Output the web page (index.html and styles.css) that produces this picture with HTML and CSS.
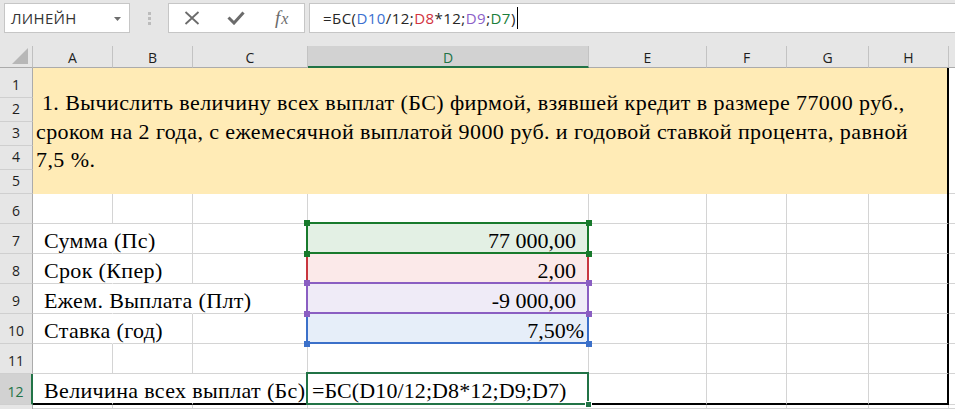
FILE: index.html
```html
<!DOCTYPE html>
<html lang="ru">
<head>
<meta charset="utf-8">
<title>Excel — БС</title>
<link rel="stylesheet" href="styles.css">
</head>
<body>
<div class="fbar">
  <div class="namebox">
    <span class="nb-text">ЛИНЕЙН</span>
    <svg class="dd" width="7" height="4" viewBox="0 0 7 4"><path d="M0 0H7L3.5 4Z" fill="#6d6d6d"/></svg>
  </div>
  <div class="grip"><i></i><i></i><i></i></div>
  <div class="btns">
    <svg class="ico-x" width="16" height="14" viewBox="0 0 16 14"><path d="M1.5 1L14.5 13M14.5 1L1.5 13" stroke="#6b6b6b" stroke-width="1.8" fill="none"/></svg>
    <svg class="ico-ok" width="18" height="14" viewBox="0 0 18 14"><path d="M1.5 6.5L7 12L16.5 1.5" stroke="#6b6b6b" stroke-width="3" fill="none"/></svg>
    <span class="fx"><span>f</span><span class="fx-x">x</span></span>
  </div>
  <div class="formula"><span class="ftext">=БС(<span class="c-blue">D10</span>/12;<span class="c-red">D8</span>*12;<span class="c-purple">D9</span>;<span class="c-green">D7</span>)</span><span class="caret"></span></div>
</div>

<div class="sheet">
  <!-- header row -->
  <div class="corner"><svg width="16" height="16" viewBox="0 0 16 16"><path d="M16 0V16H0Z" fill="#b7b7b7"/></svg></div>
  <div class="ch">A</div>
  <div class="ch">B</div>
  <div class="ch">C</div>
  <div class="ch ch-sel">D</div>
  <div class="ch">E</div>
  <div class="ch">F</div>
  <div class="ch">G</div>
  <div class="ch">H</div>
  <div class="ch ch-end"></div>

  <!-- rows 1-5 headers -->
  <div class="rh r1">1</div>
  <div class="rh">2</div>
  <div class="rh">3</div>
  <div class="rh">4</div>
  <div class="rh">5</div>

  <div class="task">
    <p class="task-text">&nbsp;1. Вычислить величину всех выплат (БС) фирмой, взявшей кредит в размере 77000 руб.,<br>сроком на 2 года, с ежемесячной выплатой 9000 руб. и годовой ставкой процента, равной<br>7,5 %.</p>
  </div>
  <div class="c c-end r15"></div>

  <!-- row 6 -->
  <div class="rh">6</div>
  <div class="c"></div><div class="c"></div><div class="c"></div><div class="c"></div>
  <div class="c"></div><div class="c"></div><div class="c"></div><div class="c c-h"></div><div class="c c-end"></div>

  <!-- row 7 -->
  <div class="rh">7</div>
  <div class="c nob lbl">Сумма (Пс)</div><div class="c"></div><div class="c"></div>
  <div class="c num rng rng-green">77 000,00
    <i class="hd hd-tl"></i><i class="hd hd-tr"></i><i class="hd hd-bl"></i><i class="hd hd-br"></i>
  </div>
  <div class="c"></div><div class="c"></div><div class="c"></div><div class="c c-h"></div><div class="c c-end"></div>

  <!-- row 8 -->
  <div class="rh">8</div>
  <div class="c nob lbl">Срок (Кпер)</div><div class="c"></div><div class="c"></div>
  <div class="c num rng rng-red">2,00</div>
  <div class="c"></div><div class="c"></div><div class="c"></div><div class="c c-h"></div><div class="c c-end"></div>

  <!-- row 9 -->
  <div class="rh">9</div>
  <div class="c nob lbl">Ежем. Выплата (Плт)</div><div class="c nob"></div><div class="c"></div>
  <div class="c num rng rng-purple">-9 000,00
    <i class="hd hd-tl"></i><i class="hd hd-tr"></i><i class="hd hd-bl"></i><i class="hd hd-br"></i>
  </div>
  <div class="c"></div><div class="c"></div><div class="c"></div><div class="c c-h"></div><div class="c c-end"></div>

  <!-- row 10 -->
  <div class="rh">10</div>
  <div class="c nob lbl">Ставка (год)</div><div class="c"></div><div class="c"></div>
  <div class="c num pct rng rng-blue">7,50%
    <i class="hd hd-bl"></i><i class="hd hd-br"></i>
  </div>
  <div class="c"></div><div class="c"></div><div class="c"></div><div class="c c-h"></div><div class="c c-end"></div>

  <!-- row 11 -->
  <div class="rh">11</div>
  <div class="c"></div><div class="c"></div><div class="c"></div><div class="c"></div>
  <div class="c"></div><div class="c"></div><div class="c"></div><div class="c c-h"></div><div class="c c-end"></div>

  <!-- row 12 -->
  <div class="rh rh-sel">12</div>
  <div class="c nob lbl last">Величина всех выплат (Бс)</div><div class="c nob last"></div><div class="c nob last"></div>
  <div class="c last sel">=БС(D10/12;D8*12;D9;D7)<i class="fill"></i></div>
  <div class="c last"></div><div class="c last"></div><div class="c last"></div><div class="c c-h last"></div><div class="c c-end"></div>

  <!-- row 13 (partial) -->
  <div class="rh rh-cut"></div>
  <div class="c"></div><div class="c"></div><div class="c"></div><div class="c"></div>
  <div class="c"></div><div class="c"></div><div class="c"></div><div class="c"></div><div class="c c-end"></div>
</div>
</body>
</html>
```

FILE: styles.css
```css
* { box-sizing: border-box; }

html, body {
  margin: 0;
  padding: 0;
  width: 955px;
  height: 409px;
  overflow: hidden;
  background: #ffffff;
}

/* ---------- formula bar ---------- */
.fbar {
  height: 46px;
  background: #e6e6e6;
  display: flex;
  align-items: flex-start;
  padding-top: 3px;
  font-family: "Open Sans", "Noto Sans", sans-serif;
}

.namebox {
  margin-left: 4px;
  width: 126px;
  height: 30px;
  background: #fff;
  border: 1px solid #c6c6c6;
  display: flex;
  align-items: center;
  padding-left: 6px;
  position: relative;
}
.nb-text {
  font-size: 15px;
  color: #333;
  letter-spacing: 0.3px;
}
.dd {
  position: absolute;
  right: 8px;
  top: 13px;
}

.grip {
  width: 38px;
  height: 30px;
  display: flex;
  flex-direction: column;
  align-items: center;
  justify-content: center;
  gap: 2px;
}
.grip i {
  display: block;
  width: 3px;
  height: 3px;
  background: #bcbcbc;
}

.btns {
  width: 137px;
  height: 30px;
  background: #fff;
  border: 1px solid #c6c6c6;
  display: flex;
  align-items: center;
  position: relative;
}
.ico-x { margin-left: 15px; }
.ico-ok { margin-left: 27px; }
.fx {
  margin-left: 30px;
  font-family: "Liberation Serif", serif;
  font-style: italic;
  font-size: 19px;
  color: #6b6b6b;
  line-height: 1;
  margin-top: -2px;
}
.fx-x { font-size: 16px; margin-left: 1px; }

.formula {
  flex: 1;
  margin-left: 4px;
  margin-right: -3px;
  height: 30px;
  background: #fff;
  border: 1px solid #c6c6c6;
  display: flex;
  align-items: center;
  padding-left: 13px;
  font-size: 15px;
  color: #262626;
}
.ftext { letter-spacing: 0.45px; }
.c-blue { color: #3a6fd0; }
.c-red { color: #d2323e; }
.c-purple { color: #8c5fc8; }
.c-green { color: #1b7e3b; }
.caret {
  display: inline-block;
  width: 1px;
  height: 22px;
  background: #000;
  margin-left: 1px;
}

/* ---------- sheet grid ---------- */
.sheet {
  display: grid;
  grid-template-columns: 33px 80px 80px 115px 281px 118px 80px 82px 80px 1fr;
  grid-template-rows: 22px 30px 24px 24px 24px 24px 30px 30px 30px 30px 30px 30px 31px 1fr;
  height: 363px;
  font-family: "Liberation Serif", "Times New Roman", serif;
}

.corner {
  background: #e6e6e6;
  border-right: 1px solid #c0c0c0;
  border-bottom: 1px solid #ababab;
  display: flex;
  align-items: flex-end;
  justify-content: flex-end;
  padding: 0 4px 3px 0;
}

.ch {
  background: #e6e6e6;
  border-right: 1px solid #c3c3c3;
  border-bottom: 1px solid #ababab;
  display: flex;
  align-items: center;
  justify-content: center;
  font-family: "Open Sans", "Noto Sans", sans-serif;
  font-size: 14px;
  color: #1e1e1e;
  padding-top: 1px;
}
.ch-sel {
  background: #d2d2d2;
  color: #217346;
  border-bottom: 2px solid #217346;
  padding-top: 2px;
}
.ch-end { border-right: none; }

.rh {
  grid-column: 1;
  background: #e6e6e6;
  border-right: 1px solid #ababab;
  border-bottom: 1px solid #cfcfcf;
  display: flex;
  align-items: flex-end;
  justify-content: center;
  font-family: "Open Sans", "Noto Sans", sans-serif;
  font-size: 14px;
  line-height: 20px;
  padding-bottom: 2px;
  color: #1e1e1e;
}
.rh-sel {
  background: #d2d2d2;
  color: #217346;
  border-right: 2px solid #217346;
}
.rh-cut { border-bottom: none; }

.task {
  grid-column: 2 / 10;
  grid-row: 2 / 7;
  background: #ffebb6;
  border-right: 2px solid #000;
  display: flex;
  align-items: center;
  padding: 0 3px;
  overflow: hidden;
}
.task-text {
  margin: 0;
  font-size: 22px;
  line-height: 28.5px;
  letter-spacing: 0.42px;
  color: #000;
  white-space: nowrap;
  padding-top: 2px;
}
.r15 { grid-column: 10; grid-row: 2 / 7; }

.c {
  border-right: 1px solid #d4d4d4;
  border-bottom: 1px solid #d4d4d4;
  font-size: 22px;
  line-height: 24px;
  color: #000;
  white-space: nowrap;
  display: flex;
  align-items: flex-end;
  min-width: 0;
}
.c-h { border-right: 2px solid #000; }
.c-end { border-right: none; }
.nob { border-right-color: transparent; }
.lbl { padding-left: 11px; overflow: visible; letter-spacing: 0.35px; }
.last { border-bottom: 2px solid #000; }

.num {
  justify-content: flex-end;
  padding-right: 12px;
}
.pct { padding-right: 4px; }

/* coloured reference ranges */
.rng { position: relative; }
.rng::after {
  content: "";
  position: absolute;
  left: -2px;
  top: -2px;
  right: -1px;
  bottom: -1px;
  border: 2px solid var(--rc);
  pointer-events: none;
}
.rng-green { --rc: #187a2c; background: #e3f0e4; }
.rng-red { --rc: #c8363f; background: #fbe9e9; }
.rng-purple { --rc: #8a5ec2; background: #efebf7; }
.rng-blue { --rc: #3b70c9; background: #e6eef9; }
.rng-green::after, .rng-purple::after { z-index: 3; }
.rng-red::after, .rng-blue::after { z-index: 2; }

.hd {
  position: absolute;
  width: 6px;
  height: 6px;
  background: var(--rc);
  z-index: 4;
}
.hd-tl { left: -4px; top: -4px; }
.hd-tr { right: -4px; top: -4px; }
.hd-bl { left: -4px; bottom: -4px; }
.hd-br { right: -4px; bottom: -4px; }

/* active cell */
.sel {
  position: relative;
  padding-left: 4px;
  letter-spacing: 0.1px;
}
.sel::after {
  content: "";
  position: absolute;
  left: -2px;
  top: -2px;
  right: -1px;
  bottom: -2px;
  border: 2px solid #217346;
  pointer-events: none;
  z-index: 3;
}
.fill {
  position: absolute;
  right: -4px;
  bottom: -5px;
  width: 7px;
  height: 7px;
  background: #217346;
  border: 1px solid #fff;
  z-index: 4;
}
```
